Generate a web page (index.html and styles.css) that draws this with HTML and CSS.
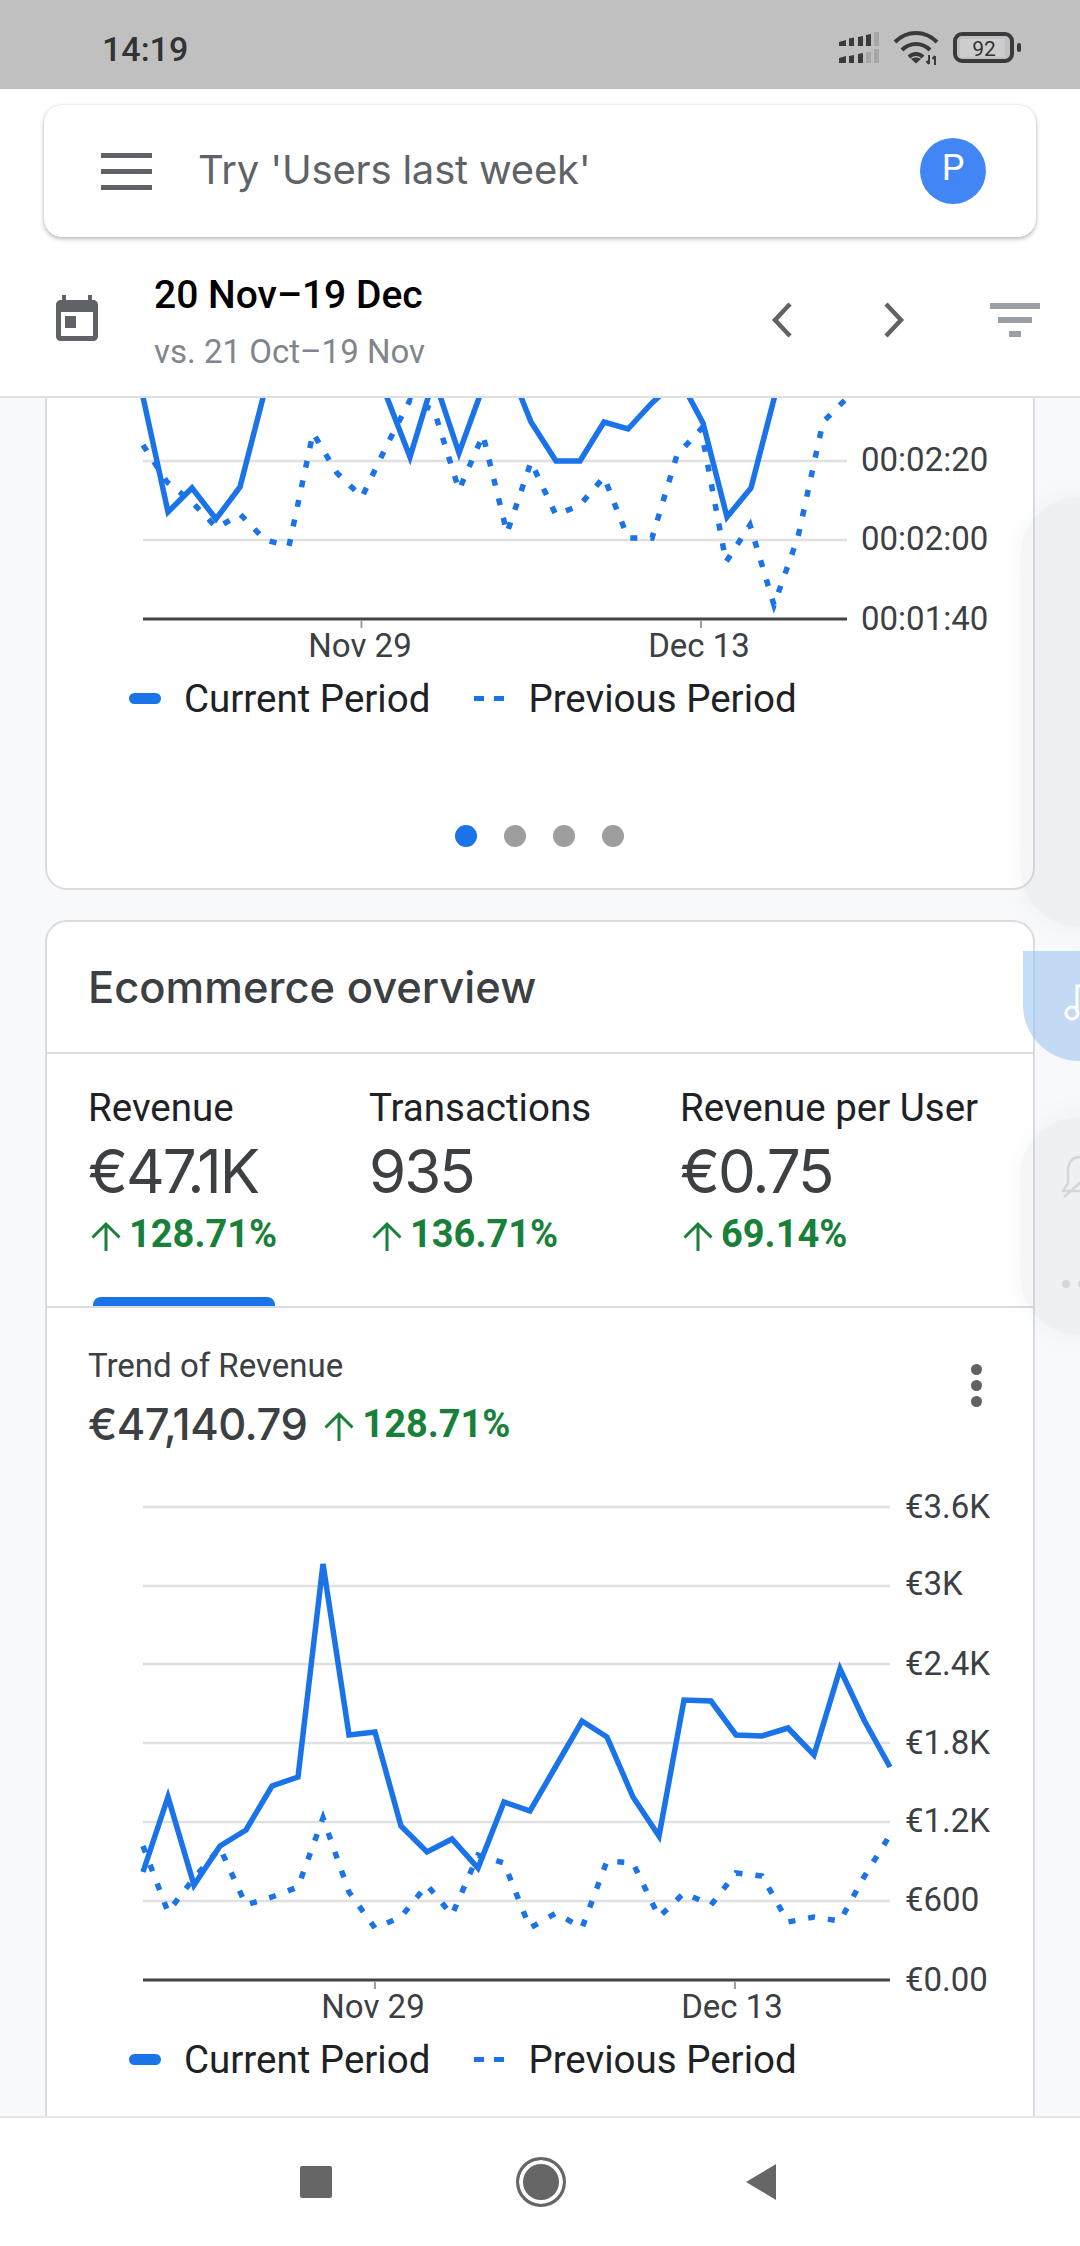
FILE: index.html
```html
<!DOCTYPE html>
<html lang="en">
<head>
    <meta charset="UTF-8">
    <meta name="viewport" content="width=device-width, initial-scale=1.0">
    <title>Analytics</title>
    <link rel="stylesheet" href="styles.css">
</head>
<body>
<div class="phone">

    <div class="status-bar">
        <span class="clock">14:19</span>
        <svg class="status-icons" width="190" height="40" viewBox="835 28 190 40">
            <!-- signal, two sims -->
            <g fill="#3a3a3a">
                <path d="M839 42l7-2v6h-7zM849 38.500l5-1v8.500h-5zM858 37l5-1v10h-5zM866 35l5-1v12h-5z"/>
                <path d="M839 58l7-2v7h-7zM849 56l5-1v8h-5zM858 54l5-1v10h-5z"/>
            </g>
            <g fill="#a6a6a6">
                <path d="M874 32h5v14h-5z"/>
                <path d="M866 52h5v11h-5zM874 49h5v14h-5z"/>
            </g>
            <!-- wifi -->
            <g fill="none" stroke="#3a3a3a" stroke-width="4">
                <path d="M895 42c12-12 30-12 42 0"/>
                <path d="M902 50c8-8 20-8 28 0"/>
                <path d="M909 57c4-4 10-4 14 0"/>
            </g>
            <path d="M911 59c3-2 7-2 10 0l-5 4.500z" fill="#3a3a3a"/>
            <path d="M929 55v9M926.500 61l2.500 3M935 65v-9M932.500 59l2.500-3" fill="none" stroke="#3a3a3a" stroke-width="2"/>
            <!-- battery -->
            <rect x="955" y="34" width="57" height="27" rx="7" fill="none" stroke="#3a3a3a" stroke-width="4"/>
            <rect x="960" y="39" width="45" height="18" fill="#cdcdcd"/>
            <text class="battery-text" x="984" y="56" text-anchor="middle">92</text>
            <rect x="1017" y="43" width="4" height="9" rx="2" fill="#3a3a3a"/>
        </svg>
    </div>

    <header class="app-header">
        <div class="search-card">
            <div class="menu-icon"><span></span><span></span><span></span></div>
            <div class="search-text">Try 'Users last week'</div>
            <div class="avatar">P</div>
        </div>
        <div class="date-row">
            <svg class="calendar-icon" width="42" height="46" viewBox="0 0 42 46">
                <path fill="#5f6368" fill-rule="evenodd" d="M6 0h4v5h22V0h4v5h1c3 0 5 2 5 5v31c0 3-2 5-5 5H5c-3 0-5-2-5-5V10c0-3 2-5 5-5h1zM5 17v24h32V17zM9 21h11v12H9z"/>
            </svg>
            <div class="date-text">
                <div class="date-main">20 Nov–19 Dec</div>
                <div class="date-sub">vs. 21 Oct–19 Nov</div>
            </div>
            <svg class="chevron" width="22" height="36" viewBox="0 0 22 36">
                <path d="M19 2L4 18l15 16" fill="none" stroke="#5f6368" stroke-width="4.500"/>
            </svg>
            <svg class="chevron chevron-next" width="22" height="36" viewBox="0 0 22 36">
                <path d="M3 2l15 16L3 34" fill="none" stroke="#5f6368" stroke-width="4.500"/>
            </svg>
            <div class="filter-icon"><span></span><span></span><span></span></div>
        </div>
    </header>

    <main class="content">

        <section class="card card-cut">
            <svg class="chart chart-top" width="986" height="272" viewBox="47 398 986 272">
                <g class="grid">
                    <line x1="143" x2="847" y1="461" y2="461"/>
                    <line x1="143" x2="847" y1="540" y2="540"/>
                </g>
                <polyline class="line-prev" points="143,445 167,482 192,502 217,528 240,514 265,540 289,546 313,433 337,473 362,497 386,447 410,400 434,410 459,490 483,435 507,533 531,462 556,515 580,505 604,477 628,538 652,538 677,455 701,429 726,562 750,525 774,605 798,537 823,422 847,398"/>
                <polyline class="line-cur" points="143,397 168,512 192,488 216,519 240,487 265,390 289,340 313,340 337,340 362,340 386,395 410,457 434,378 459,453 483,387 507,362 531,422 556,461 580,461 604,422 628,429 652,403 679,378 703,423 727,517 751,488 775,395 799,350 823,350 847,350"/>
                <line class="axis" x1="143" x2="847" y1="619" y2="619"/>
                <line class="tick" x1="361.500" x2="361.500" y1="620" y2="628"/>
                <line class="tick" x1="701" x2="701" y1="620" y2="628"/>
                <text class="tick-label" x="360" y="657" text-anchor="middle">Nov 29</text>
                <text class="tick-label" x="699" y="657" text-anchor="middle">Dec 13</text>
                <text class="axis-label" x="861" y="471">00:02:20</text>
                <text class="axis-label" x="861" y="550">00:02:00</text>
                <text class="axis-label" x="861" y="630">00:01:40</text>
            </svg>
            <div class="legend legend-top">
                <span class="legend-solid"></span>
                <span class="legend-text">Current Period</span>
                <span class="legend-dashes"><i></i><i></i></span>
                <span class="legend-text">Previous Period</span>
            </div>
            <div class="pager">
                <span class="pager-dot active"></span>
                <span class="pager-dot"></span>
                <span class="pager-dot"></span>
                <span class="pager-dot"></span>
            </div>
        </section>

        <section class="card card-ecommerce">
            <h2 class="card-title">Ecommerce overview</h2>

            <div class="metrics">
                <div class="metric selected">
                    <div class="metric-name">Revenue</div>
                    <div class="metric-value">€47.1K</div>
                    <div class="delta">
                        <svg class="up-arrow" width="30" height="30" viewBox="0 0 30 30"><path d="M15 30V3M1.500 16.500L15 3l13.500 13.500" fill="none" stroke="#188038" stroke-width="3"/></svg>
                        <span>128.71%</span>
                    </div>
                </div>
                <div class="metric">
                    <div class="metric-name">Transactions</div>
                    <div class="metric-value">935</div>
                    <div class="delta">
                        <svg class="up-arrow" width="30" height="30" viewBox="0 0 30 30"><path d="M15 30V3M1.500 16.500L15 3l13.500 13.500" fill="none" stroke="#188038" stroke-width="3"/></svg>
                        <span>136.71%</span>
                    </div>
                </div>
                <div class="metric">
                    <div class="metric-name">Revenue per User</div>
                    <div class="metric-value">€0.75</div>
                    <div class="delta">
                        <svg class="up-arrow" width="30" height="30" viewBox="0 0 30 30"><path d="M15 30V3M1.500 16.500L15 3l13.500 13.500" fill="none" stroke="#188038" stroke-width="3"/></svg>
                        <span>69.14%</span>
                    </div>
                </div>
            </div>

            <div class="trend-head">
                <div class="trend-info">
                    <div class="trend-name">Trend of Revenue</div>
                    <div class="trend-row">
                        <span class="trend-total">€47,140.79</span>
                        <span class="delta">
                            <svg class="up-arrow" width="30" height="30" viewBox="0 0 30 30"><path d="M15 30V3M1.500 16.500L15 3l13.500 13.500" fill="none" stroke="#188038" stroke-width="3"/></svg>
                            <span>128.71%</span>
                        </span>
                    </div>
                </div>
                <div class="kebab"><span></span><span></span><span></span></div>
            </div>

            <svg class="chart chart-bottom" width="986" height="550" viewBox="47 1480 986 550">
                <g class="grid">
                    <line x1="143" x2="890" y1="1507" y2="1507"/>
                    <line x1="143" x2="890" y1="1586" y2="1586"/>
                    <line x1="143" x2="890" y1="1664" y2="1664"/>
                    <line x1="143" x2="890" y1="1743" y2="1743"/>
                    <line x1="143" x2="890" y1="1822" y2="1822"/>
                    <line x1="143" x2="890" y1="1901" y2="1901"/>
                </g>
                <polyline class="line-prev" points="143,1846 168,1912 194,1878 220,1848 246,1905 272,1897 298,1887 323,1818 349,1892 375,1928 401,1917 427,1885 452,1915 478,1855 504,1863 530,1928 556,1913 582,1928 607,1861 633,1863 659,1917 684,1893 711,1905 736,1873 762,1876 788,1922 814,1917 840,1921 864,1877 890,1835"/>
                <polyline class="line-cur" points="143,1872 168,1797 194,1885 220,1846 246,1830 272,1786 298,1777 323,1564 349,1735 375,1732 401,1826 427,1852 452,1839 478,1868 504,1802 530,1811 556,1766 582,1721 607,1737 633,1797 659,1836 684,1700 711,1701 736,1735 762,1736 788,1728 814,1755 840,1669 864,1720 890,1767"/>
                <line class="axis" x1="143" x2="890" y1="1980" y2="1980"/>
                <line class="tick" x1="375" x2="375" y1="1981" y2="1989"/>
                <line class="tick" x1="735" x2="735" y1="1981" y2="1989"/>
                <text class="tick-label" x="373" y="2018" text-anchor="middle">Nov 29</text>
                <text class="tick-label" x="732" y="2018" text-anchor="middle">Dec 13</text>
                <text class="axis-label" x="905" y="1518">€3.6K</text>
                <text class="axis-label" x="905" y="1595">€3K</text>
                <text class="axis-label" x="905" y="1675">€2.4K</text>
                <text class="axis-label" x="905" y="1754">€1.8K</text>
                <text class="axis-label" x="905" y="1832">€1.2K</text>
                <text class="axis-label" x="905" y="1911">€600</text>
                <text class="axis-label" x="905" y="1991">€0.00</text>
            </svg>
            <div class="legend legend-bottom">
                <span class="legend-solid"></span>
                <span class="legend-text">Current Period</span>
                <span class="legend-dashes"><i></i><i></i></span>
                <span class="legend-text">Previous Period</span>
            </div>
        </section>

        <!-- system side panel, lies over the page -->
        <div class="side-panel side-panel-top"></div>
        <div class="side-tab">
            <svg width="20" height="38" viewBox="0 0 20 38">
                <circle cx="9" cy="30" r="6" fill="none" stroke="#fff" stroke-width="3"/>
                <path d="M14 30V3h8" fill="none" stroke="#fff" stroke-width="3"/>
            </svg>
        </div>
        <div class="side-panel side-panel-low">
            <svg class="side-bell" width="20" height="52" viewBox="0 0 20 52">
                <path d="M18 4C10 4 6 10 6 18v12l-5 8h20M2 44l18-16" fill="none" stroke="#d4d6d8" stroke-width="2.500"/>
            </svg>
            <div class="side-dots"><span></span><span></span></div>
        </div>
    </main>

    <footer class="nav-bar">
        <span class="nav-square"></span>
        <span class="nav-home"></span>
        <svg class="nav-back" width="31" height="36" viewBox="0 0 31 36"><path d="M31 0v36L1 18z" fill="#666"/></svg>
    </footer>

</div>
</body>
</html>
```

FILE: styles.css
```css
* {
    box-sizing: border-box;
}

body {
    margin: 0;
    font-family: Roboto, "Liberation Sans", sans-serif;
    background-color: #f8f9fa;
}

.phone {
    width: 1080px;
    height: 2246px;
    display: flex;
    flex-direction: column;
    overflow: hidden;
}

/* status bar */
.status-bar {
    height: 89px;
    flex: none;
    background-color: #c0c0c0;
    display: flex;
    align-items: center;
    justify-content: space-between;
    padding: 0 55px 0 102px;
}

.clock {
    font-size: 34px;
    font-weight: 500;
    color: #333;
    margin-top: 8px;
}

.status-icons {
    margin-top: 7px;
}

.battery-text {
    font-size: 21px;
    fill: #333;
}

/* header */
.app-header {
    height: 309px;
    flex: none;
    background-color: #fff;
    border-bottom: 2px solid #e0e0e0;
    padding-top: 16px;
}

.search-card {
    height: 132px;
    margin: 0 44px;
    background-color: #fff;
    border-radius: 18px;
    box-shadow: 0 2px 4px rgba(60, 64, 67, 0.35), 0 0 3px rgba(60, 64, 67, 0.12);
    display: flex;
    align-items: center;
    padding: 0 50px 0 57px;
}

.menu-icon {
    width: 51px;
    display: flex;
    flex-direction: column;
    gap: 11px;
}

.menu-icon span {
    height: 5px;
    background-color: #5f6368;
}

.search-text {
    flex: 1;
    margin-left: 46px;
    font-size: 40px;
    font-family: Inter, Roboto, sans-serif;
    letter-spacing: -0.2px;
    color: #5f6368;
    margin-bottom: 4px;
}

.avatar {
    width: 66px;
    height: 66px;
    border-radius: 50%;
    background-color: #4285f4;
    color: #fff;
    font-size: 36px;
    text-align: center;
    line-height: 60px;
}

.date-row {
    height: 159px;
    display: flex;
    align-items: center;
    padding-left: 56px;
}

.calendar-icon {
    flex: none;
    margin-top: 3px;
}

.date-text {
    margin-left: 56px;
    width: 617px;
    margin-top: 11px;
}

.date-main {
    font-size: 39px;
    font-weight: 500;
    color: #000;
    line-height: 42px;
}

.date-sub {
    margin-top: 18px;
    font-size: 33px;
    color: #80868b;
    line-height: 36px;
}

.chevron {
    flex: none;
    margin-top: 7px;
}

.chevron-next {
    margin-left: 90px;
}

.filter-icon {
    width: 50px;
    margin-left: 85px;
    margin-top: 7px;
    display: flex;
    flex-direction: column;
    align-items: center;
    gap: 8px;
}

.filter-icon span {
    height: 6px;
    background-color: #9aa0a6;
    width: 50px;
}

.filter-icon span:nth-child(2) {
    width: 34px;
}

.filter-icon span:nth-child(3) {
    width: 12px;
}

/* page */
.content {
    flex: 1;
    position: relative;
    overflow: hidden;
    padding: 0 45px;
}

.card {
    background-color: #fff;
    border: 2px solid #dadce0;
    border-radius: 22px;
}

.card-cut {
    height: 492px;
    border-top: none;
    border-top-left-radius: 0;
    border-top-right-radius: 0;
}

.card-ecommerce {
    margin-top: 30px;
    height: 1400px;
}

.chart {
    display: block;
}

.grid line {
    stroke: #e0e0e0;
    stroke-width: 2.500;
}

.axis {
    stroke: #424242;
    stroke-width: 3;
}

.tick {
    stroke: #9e9e9e;
    stroke-width: 2;
}

.line-cur {
    fill: none;
    stroke: #1a73e8;
    stroke-width: 5.500;
    stroke-linejoin: miter;
}

.line-prev {
    fill: none;
    stroke: #1a73e8;
    stroke-width: 5.500;
    stroke-dasharray: 7 13;
}

.tick-label {
    font-size: 33px;
    fill: #3c4043;
}

.axis-label {
    font-size: 33px;
    fill: #3c4043;
}

.legend {
    display: flex;
    align-items: center;
    height: 50px;
    padding-left: 82px;
}

.legend-top {
    margin-top: 3px;
}

.legend-bottom {
    margin-top: 4px;
}

.legend-solid {
    width: 32px;
    height: 11px;
    border-radius: 6px;
    background-color: #1a73e8;
}

.legend-text {
    margin-left: 23px;
    font-size: 38.500px;
    color: #202124;
}

.legend-dashes {
    margin-left: 44px;
    margin-right: 1px;
    display: flex;
    gap: 10px;
}

.legend-dashes i {
    width: 10px;
    height: 5px;
    background-color: #1a73e8;
}

.pager {
    margin-top: 102px;
    padding-right: 2px;
    display: flex;
    justify-content: center;
    gap: 27px;
}

.pager-dot {
    width: 22px;
    height: 22px;
    border-radius: 50%;
    background-color: #9e9e9e;
}

.pager-dot.active {
    background-color: #1a73e8;
}

.card-title {
    margin: 0;
    height: 132px;
    padding-left: 41px;
    line-height: 130px;
    font-family: Inter, Roboto, sans-serif;
    font-size: 43.500px;
    font-weight: 500;
    color: #3c4043;
    border-bottom: 2px solid #dadce0;
}

.metrics {
    height: 254px;
    display: grid;
    grid-template-columns: 280px 311px 1fr;
    border-bottom: 2px solid #dadce0;
}

.metric {
    padding: 32px 0 0 42px;
    position: relative;
}

.metric.selected {
    padding-left: 41px;
}

.metric.selected::after {
    content: "";
    position: absolute;
    left: 46px;
    bottom: 0;
    width: 182px;
    height: 9px;
    border-radius: 8px 8px 0 0;
    background-color: #1a73e8;
}

.metric-name {
    font-size: 38.500px;
    line-height: 44px;
    color: #202124;
}

.metric-value {
    margin-top: 10px;
    font-family: Inter, Roboto, sans-serif;
    font-size: 60px;
    line-height: 62px;
    letter-spacing: -2px;
    color: #3c4043;
}

.delta {
    display: flex;
    align-items: center;
    font-size: 38px;
    font-weight: 700;
    color: #188038;
}

.metric .delta {
    margin-top: 12px;
    line-height: 40px;
}

.up-arrow {
    flex: none;
    margin: 3px 8px 0 3px;
}

.trend-head {
    height: 172px;
    padding: 40px 51px 0 41px;
    display: flex;
    justify-content: space-between;
}

.trend-name {
    font-size: 33px;
    line-height: 36px;
    color: #3c4043;
}

.trend-row {
    margin-top: 14px;
    display: flex;
    align-items: center;
    gap: 14px;
}

.trend-total {
    font-family: Inter, Roboto, sans-serif;
    font-size: 43.500px;
    font-weight: 500;
    letter-spacing: -0.5px;
    color: #3c4043;
}

.trend-row .delta {
    font-size: 38px;
}

.kebab {
    width: 11px;
    margin-top: 16px;
    display: flex;
    flex-direction: column;
    gap: 5px;
}

.kebab span {
    width: 11px;
    height: 11px;
    border-radius: 50%;
    background-color: #5f6368;
}

/* side panel */
.side-panel {
    position: absolute;
    left: 1020px;
    width: 90px;
    border-radius: 60px 0 0 60px;
    background-color: rgba(128, 134, 139, 0.07);
    box-shadow: 0 0 24px rgba(128, 134, 139, 0.08);
}

.side-panel-top {
    top: 99px;
    height: 430px;
}

.side-panel-low {
    top: 719px;
    height: 218px;
}

.side-tab {
    position: absolute;
    left: 1023px;
    top: 553px;
    width: 57px;
    height: 110px;
    border-bottom-left-radius: 56px;
    background-color: rgba(140, 187, 238, 0.5);
    padding: 32px 0 0 40px;
    overflow: hidden;
}

.side-bell {
    position: absolute;
    left: 42px;
    top: 36px;
}

.side-dots {
    position: absolute;
    left: 42px;
    top: 163px;
    display: flex;
    gap: 8px;
}

.side-dots span {
    width: 8px;
    height: 8px;
    border-radius: 50%;
    background-color: #d4d6d8;
}

/* nav bar */
.nav-bar {
    height: 130px;
    flex: none;
    background-color: #fff;
    border-top: 2px solid #e6e6e6;
    position: relative;
    z-index: 1;
    display: flex;
    align-items: center;
    padding-left: 300px;
}

.nav-square {
    width: 32px;
    height: 32px;
    background-color: #666;
    border-radius: 2px;
}

.nav-home {
    width: 50px;
    height: 50px;
    margin-left: 184px;
    border: 3px solid #666;
    border-radius: 50%;
    background-color: #666;
    box-shadow: inset 0 0 0 4px #fff;
}

.nav-back {
    margin-left: 179px;
}
```
